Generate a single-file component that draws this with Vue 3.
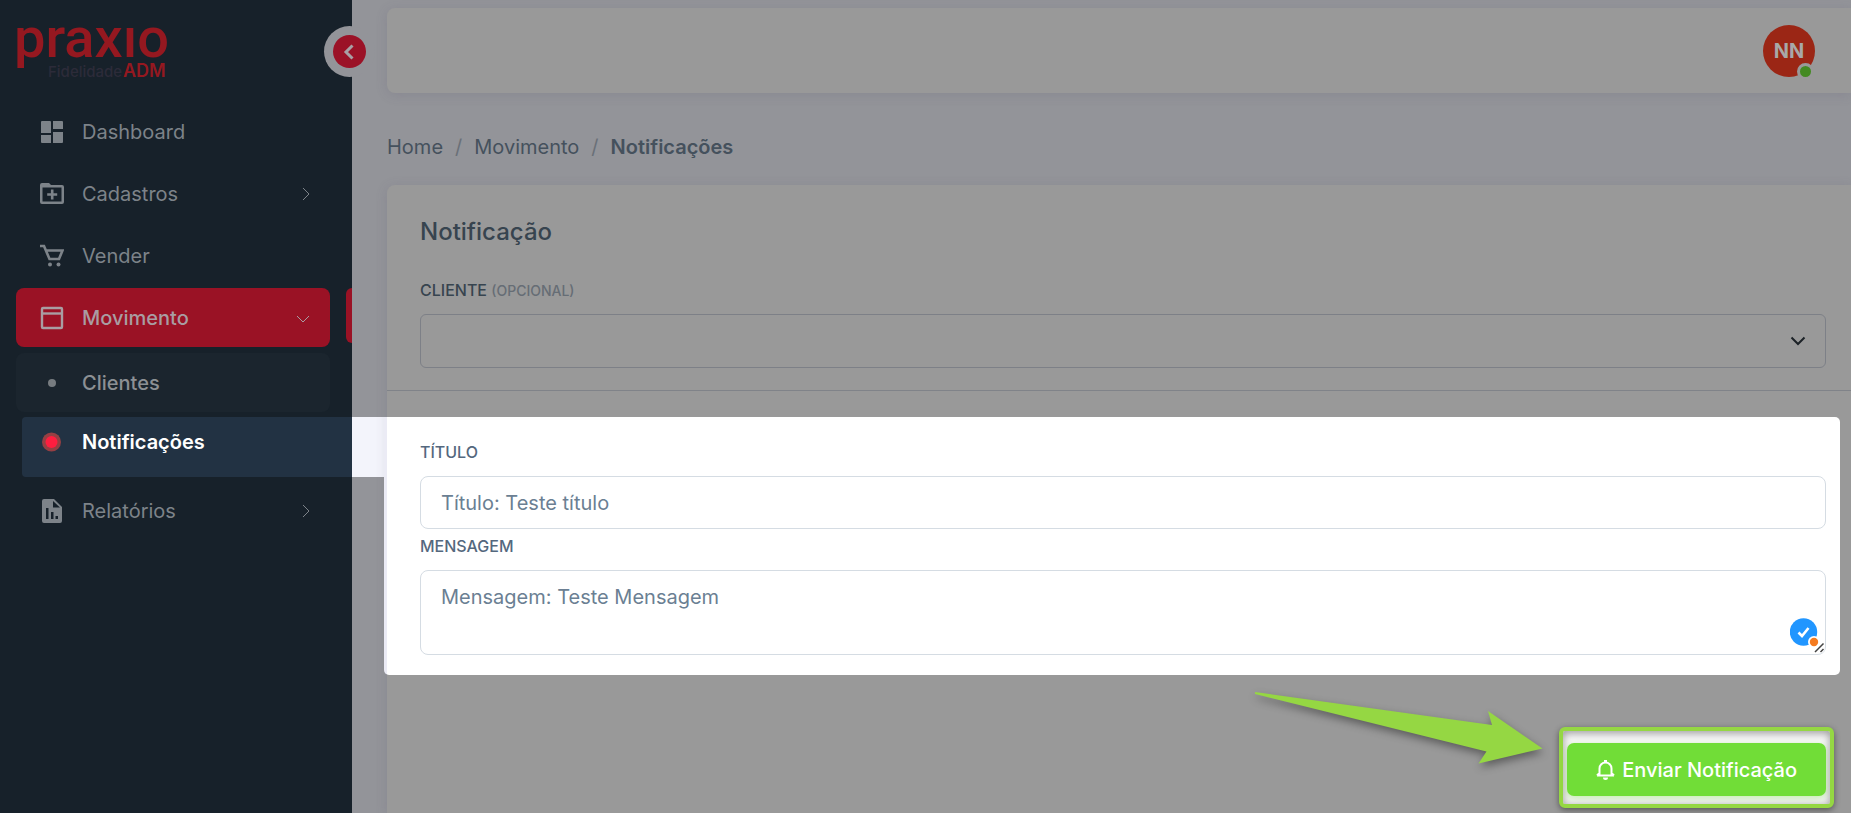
<script setup>
import { ref } from 'vue'

const cliente = ref('')
const titulo = ref('')
const mensagem = ref('')
</script>

<template>
  <div class="app">
    <aside class="sidebar">
      <a class="brand" href="#" aria-label="praxio Fidelidade ADM">
        <svg width="160" height="64" viewBox="0 0 160 64">
          <text class="brand-name" x="-2" y="41">praxıo</text>
          <text class="brand-sub" x="32" y="61">Fidelidade</text>
          <text class="brand-adm" x="107" y="61">ADM</text>
        </svg>
      </a>
      <button class="toggle" type="button" aria-label="Recolher menu">
        <svg width="33" height="33" viewBox="0 0 33 33">
          <circle cx="16.500" cy="16.500" r="16.500" fill="#9b1227" />
          <path d="M19.500 10.500 13 17l6.500 6.500" fill="none" stroke="#a8a0a5" stroke-width="3" />
        </svg>
      </button>
      <nav class="menu">
        <a class="item" href="#">
          <svg class="icon" viewBox="0 0 24 24" fill="currentColor">
            <path d="M2 1h8a1 1 0 0 1 1 1v11H1V2a1 1 0 0 1 1-1zM13 1h9a1 1 0 0 1 1 1v7H13zM1 15h10v8H2a1 1 0 0 1-1-1zM13 12h10v10a1 1 0 0 1-1 1h-9z" />
          </svg>
          <span>Dashboard</span>
        </a>
        <a class="item" href="#">
          <svg class="icon" viewBox="0 0 24 24">
            <path d="M0 20V3q0-2 2-2h7l2 2h11q2 0 2 2v15q0 2-2 2H2q-2 0-2-2zM2.500 5.500V19.500h19V5.500z" fill="currentColor" fill-rule="evenodd" />
            <path d="M12.200 7.500v10M7.200 12.500h10" stroke="currentColor" stroke-width="2.600" />
          </svg>
          <span>Cadastros</span>
          <svg class="arrow" viewBox="0 0 14 14"><path d="m4 1 6 6-6 6" /></svg>
        </a>
        <a class="item" href="#">
          <svg class="icon" viewBox="0 0 24 24">
            <path d="M0 2h4l5.500 13H19l3.500-8.500H6.500" fill="none" stroke="currentColor" stroke-width="2.600" />
            <circle cx="10" cy="20.500" r="2" fill="currentColor" />
            <circle cx="18.500" cy="20.500" r="2" fill="currentColor" />
          </svg>
          <span>Vender</span>
        </a>
        <a class="item active" href="#">
          <svg class="icon" viewBox="0 0 24 24">
            <rect x="2" y="2" width="20" height="20" rx="1" fill="none" stroke="currentColor" stroke-width="2.400" />
            <path d="M2 7.500h20" stroke="currentColor" stroke-width="2.400" />
          </svg>
          <span>Movimento</span>
          <svg class="arrow" viewBox="0 0 14 14"><path d="m1 5 6 6 6-6" /></svg>
        </a>
        <div class="submenu">
          <a class="item sub" href="#">
            <svg class="icon" viewBox="0 0 24 24"><circle cx="12" cy="12" r="4" fill="currentColor" /></svg>
            <span>Clientes</span>
          </a>
          <a class="item current" href="#">
            <svg class="icon" viewBox="0 0 24 24">
              <circle cx="11.500" cy="12" r="9.500" fill="#963f43" />
              <circle cx="11.500" cy="12" r="6" fill="#ff1e3f" />
            </svg>
            <span>Notificações</span>
          </a>
        </div>
        <a class="item last" href="#">
          <svg class="icon" viewBox="0 0 24 24" fill="currentColor">
            <path fill-rule="evenodd" d="M4 0h10l8 8v14a2 2 0 0 1-2 2H4a2 2 0 0 1-2-2V2a2 2 0 0 1 2-2zM13 2v6.500h7zM6 9v11h2.500V9zM11 13v7h2.500v-7zM15.500 17v3H18v-3z" />
          </svg>
          <span>Relatórios</span>
          <svg class="arrow" viewBox="0 0 14 14"><path d="m4 1 6 6-6 6" /></svg>
        </a>
      </nav>
    </aside>

    <main class="main">
      <header class="topbar">
        <button class="avatar" type="button">NN<i class="status"></i></button>
      </header>

      <nav class="crumbs" aria-label="Caminho">
        <a href="#">Home</a><i>/</i><a href="#">Movimento</a><i>/</i><strong>Notificações</strong>
      </nav>

      <form class="card" @submit.prevent>
        <section class="head">
          <h1>Notificação</h1>
          <label for="cliente">CLIENTE <small>(OPCIONAL)</small></label>
          <div class="select-wrap">
            <select id="cliente" v-model="cliente"><option value=""></option></select>
            <svg class="chevron" viewBox="0 0 16 10"><path d="m1.500 1.500 6.500 6.500 6.500-6.500" /></svg>
          </div>
        </section>

        <section class="spot">
          <label for="titulo">TÍTULO</label>
          <input id="titulo" v-model="titulo" type="text" placeholder="Título: Teste título" />
          <label for="mensagem">MENSAGEM</label>
          <div class="area-wrap">
            <textarea id="mensagem" v-model="mensagem" placeholder="Mensagem: Teste Mensagem"></textarea>
            <svg class="checker" width="36" height="36" viewBox="0 0 36 36">
              <circle cx="13.500" cy="14" r="13.700" fill="#2196ff" />
              <path d="m8.500 14.500 3.500 3.500 6.500-8" fill="none" stroke="#fff" stroke-width="2.600" />
              <circle cx="24" cy="24" r="6" fill="#fff" />
              <circle cx="24" cy="24" r="4.200" fill="#f47b20" />
              <path d="m25 34 8.500-8.500M30 34l3.500-3.500" stroke="#fff" stroke-width="4" />
              <path d="m25 34 8.500-8.500M30.500 34l3-3" stroke="#444" stroke-width="1.500" />
            </svg>
          </div>
        </section>

        <div class="actions">
          <svg class="pointer" width="300" height="84" viewBox="0 0 300 84">
            <path d="M5 5 242 38l-4-14 54.500 37.500L228.500 76.500l8-12L5 7z" />
          </svg>
          <div class="frame">
            <button class="send" type="submit">
              <svg width="19" height="20" viewBox="0 0 19 20">
                <path d="M3.500 15V8.500a6 6 0 0 1 12 0V15M1 15.500h17M1 15.500l2.500-2.500M18 15.500 15.500 13" fill="none" stroke="#fff" stroke-width="2" />
                <path d="M7 17.500h5a2.500 2.500 0 0 1-5 0zM8 0h3v2H8z" fill="#fff" />
              </svg>
              <span>Enviar Notificação</span>
            </button>
          </div>
        </div>
      </form>
    </main>
  </div>
</template>

<style>
body { background: #939499; }
</style>

<style scoped>
* { box-sizing: border-box; }
.app {
  display: flex;
  min-height: 100vh;
  overflow: hidden;
  background: #939499;
  color: #3b4855;
  font-family: Inter, "Liberation Sans", sans-serif;
  font-size: 20px;
}
a { color: inherit; text-decoration: none; }
button, input, select, textarea { font: inherit; }

.sidebar { position: relative; flex: 0 0 352px; padding-top: 16px; background: #17212a; }
.brand { display: block; height: 64px; margin-left: 16px; }
.brand svg { display: block; overflow: visible; }
.brand-name { font: 500 56px Roboto, sans-serif; fill: #951820; }
.brand-sub { font: 500 15px Inter, sans-serif; fill: #2c2b39; }
.brand-adm { font: 600 18px Inter, sans-serif; fill: #951820; }
.toggle {
  position: absolute;
  top: 26px;
  right: -23px;
  display: flex;
  padding: 9px;
  border: 0;
  border-radius: 50%;
  background: #939499;
}
.menu { display: flex; flex-direction: column; gap: 3px; padding: 22px 22px 0 16px; }
.item {
  position: relative;
  display: flex;
  align-items: center;
  gap: 18px;
  height: 59px;
  padding: 0 17px 0 24px;
  border-radius: 8px;
  color: #7d8389;
}
.item span { position: relative; flex: 1; }
.icon { position: relative; flex: none; width: 24px; height: 24px; }
.arrow { width: 14px; height: 14px; fill: none; stroke: currentColor; stroke-width: 1; }
.active { padding-right: 20px; background: #9a1225; color: #a99da2; font-weight: 500; }
.active::after {
  content: "";
  position: absolute;
  top: 0;
  right: -22px;
  width: 6px;
  height: 55px;
  border-radius: 6px 0 0 6px;
  background: #9a1225;
}
.submenu { padding-top: 3px; }
.sub { background: #1b252e; color: #8c9094; font-weight: 500; }
.sub .icon { color: #777c80; }
.current { color: #fff; font-weight: 600; }
.current::before {
  content: "";
  position: absolute;
  top: 5px;
  left: 6px;
  right: -57px;
  height: 60px;
  border-radius: 4px 0 0 4px;
  background: linear-gradient(to right, #223243 330px, #f3f4fb 330px);
}
.last { margin-top: 7px; }

.main { display: flex; flex: 1; flex-direction: column; min-width: 0; padding: 8px 0 0 35px; }
.topbar {
  display: flex;
  justify-content: flex-end;
  align-items: center;
  height: 85px;
  padding-right: 36px;
  border-radius: 8px 0 0 8px;
  background: #999;
  box-shadow: 0 2px 12px rgba(90, 85, 110, 0.18);
}
.avatar {
  position: relative;
  width: 52px;
  height: 52px;
  padding: 0;
  border: 0;
  border-radius: 50%;
  background: #9b2615;
  color: #a8a8a8;
  font-weight: 700;
}
.status {
  position: absolute;
  right: 1px;
  bottom: -3px;
  width: 17px;
  height: 17px;
  border: 3px solid #999;
  border-radius: 50%;
  background: #438a22;
}
.crumbs { display: flex; height: 92px; padding-top: 42px; line-height: 24px; color: #45515d; }
.crumbs i { margin: 0 12px; font-style: normal; color: #6a7078; }
.crumbs strong { font-weight: 600; }

.card {
  position: relative;
  flex: 1;
  border-radius: 8px 0 0 0;
  background: #999;
  box-shadow: 0 2px 12px rgba(90, 85, 110, 0.18);
}
.head { height: 206px; padding: 31px 25px 0 33px; border-bottom: 1px solid #808389; }
h1 { margin: 0 0 32px; font-size: 24px; font-weight: 500; line-height: 32px; color: #37444f; }
label { display: block; font-size: 16px; font-weight: 500; line-height: 20px; color: #37444f; }
small { font-size: 14px; color: #666d75; }
.select-wrap { position: relative; margin-top: 13px; }
select {
  display: block;
  width: 100%;
  height: 54px;
  padding: 0 48px 0 20px;
  border: 1px solid #7d8087;
  border-radius: 6px;
  background: transparent;
  appearance: none;
}
.chevron {
  position: absolute;
  top: 22px;
  right: 20px;
  width: 16px;
  height: 10px;
  fill: none;
  stroke: #1c2227;
  stroke-width: 2;
  pointer-events: none;
}
.spot {
  position: relative;
  margin: 26px 11px 0 -3px;
  padding: 25px 14px 20px 36px;
  border-radius: 0 5px 5px 5px;
  background: linear-gradient(to right, #ebebf5 3px, #fff 3px);
}
.spot label { color: #54687e; }
input, textarea {
  display: block;
  width: 100%;
  margin: 0;
  border: 1px solid #d5dce3;
  border-radius: 8px;
  background: #fff;
  color: #677c90;
  outline: 0;
}
input { height: 53px; margin: 14px 0 7px; padding: 0 20px; }
textarea { height: 85px; padding: 14px 20px; line-height: 24px; resize: none; }
::placeholder { color: #6b7f93; opacity: 1; }
.area-wrap { position: relative; margin-top: 14px; }
.checker { position: absolute; right: 0; bottom: 1px; }

.actions { display: flex; justify-content: flex-end; gap: 9px; padding: 12px 17px 0 0; }
.pointer { overflow: visible; fill: #95d743; filter: drop-shadow(1px 4px 4px rgba(0, 0, 0, 0.4)); }
.frame {
  flex: none;
  margin-top: 40px;
  padding: 12px 4px 8px;
  border: 4px solid #95d743;
  border-radius: 6px;
  background: #f8f8f8;
  box-shadow: 0 2px 6px rgba(0, 0, 0, 0.45), inset 0 2px 8px rgba(0, 0, 0, 0.4);
}
.send {
  display: flex;
  align-items: center;
  gap: 7px;
  height: 53px;
  padding: 0 29px;
  border: 0;
  border-radius: 7px;
  background: #71dd37;
  box-shadow: 0 2px 6px rgba(113, 221, 55, 0.4);
  color: #fff;
  font-weight: 500;
  white-space: nowrap;
}
</style>
